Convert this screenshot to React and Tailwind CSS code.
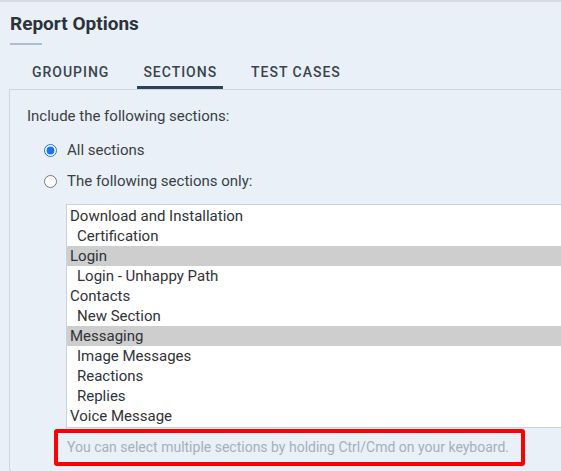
import React from 'react';

const sections = [
  { name: 'Download and Installation', depth: 0 },
  { name: 'Certification', depth: 1 },
  { name: 'Login', depth: 0, selected: true },
  { name: 'Login - Unhappy Path', depth: 1 },
  { name: 'Contacts', depth: 0 },
  { name: 'New Section', depth: 1 },
  { name: 'Messaging', depth: 0, selected: true },
  { name: 'Image Messages', depth: 1 },
  { name: 'Reactions', depth: 1 },
  { name: 'Replies', depth: 1 },
  { name: 'Voice Message', depth: 0 },
];

const tabs = ['Grouping', 'Sections', 'Test Cases'];

const App = () => {
  return (
    <div
      className="w-[561px] h-[471px] overflow-hidden bg-[#e9f0f7] border-t-2 border-[#d5dbe1] text-[#33393f]"
      style={{ fontFamily: 'Roboto, "Liberation Sans", sans-serif' }}
    >
      {/* Header */}
      <div className="pl-[10px] pt-[9px]">
        <h2 className="text-[19px] leading-[26px] font-bold text-[#2b323a]">Report Options</h2>
        <div className="mt-[6px] w-[32px] h-[2px] bg-[#aabfd4]"></div>
      </div>

      {/* Tabs */}
      <div className="ml-[9px] mt-[17px] flex items-end gap-[22px] pl-[17px] border-b border-[#cdd5de]">
        {tabs.map((t) => {
          const active = t === 'Sections';
          return (
            <div
              key={t}
              className={`px-[6px] pb-[4px] text-[14px] leading-[20px] font-medium uppercase tracking-[0.07em] text-[#3a444e] border-b-[3px] ${
                active ? 'border-[#2b4257]' : 'border-transparent'
              }`}
            >
              {t}
            </div>
          );
        })}
      </div>

      {/* Panel */}
      <div className="ml-[9px] h-[382px] border-l border-b border-[#cdd5de] rounded-bl-[4px] pl-[17px] pt-[16px]">
        <p className="text-[15px] leading-[20px] text-[#3a3f45]">Include the following sections:</p>

        <div className="mt-[14px] pl-[17px] flex flex-col gap-[11px]">
          <label className="flex items-center gap-[10px] text-[15px] leading-[20px] text-[#3a3f45]">
            <input type="radio" name="sec" defaultChecked className="w-[13px] h-[13px] m-0 accent-[#1a73e8]" />
            All sections
          </label>
          <label className="flex items-center gap-[10px] text-[15px] leading-[20px] text-[#3a3f45]">
            <input type="radio" name="sec" className="w-[13px] h-[13px] m-0 accent-[#1a73e8]" />
            The following sections only:
          </label>
        </div>

        <div className="ml-[39px] mt-[13px] w-[560px] border border-[#c9d3dd] bg-white py-[1px]">
          {sections.map((s) => (
            <div
              key={s.name}
              className={`h-[20px] leading-[20px] text-[15px] text-[#2f3338] ${s.depth ? 'pl-[10px]' : 'pl-[3px]'} ${
                s.selected ? 'bg-[#cecece]' : ''
              }`}
            >
              {s.name}
            </div>
          ))}
        </div>

        <div className="ml-[27px] mt-[1px] w-[471px] h-[37px] border-[4px] border-[#ff0000] rounded-[3px] flex items-center pl-[9px]">
          <span className="text-[14px] text-[#a7afb8]">
            You can select multiple sections by holding Ctrl/Cmd on your keyboard.
          </span>
        </div>
      </div>
    </div>
  );
};

export default App;
